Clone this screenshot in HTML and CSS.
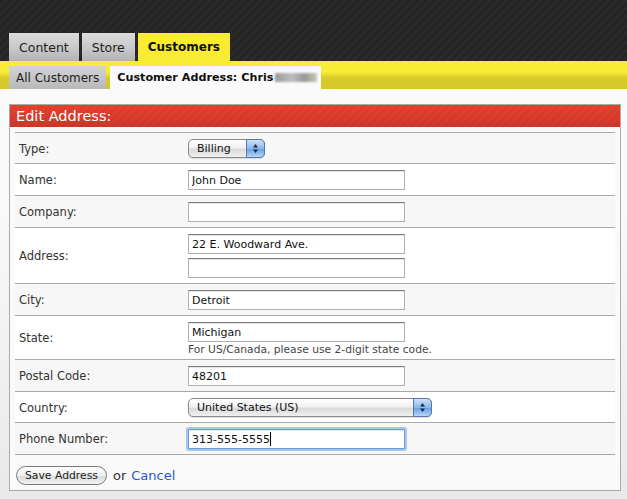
FILE: index.html
```html
<!DOCTYPE html>
<html lang="en">
<head>
<meta charset="utf-8">
<title>Edit Address</title>
<link rel="stylesheet" href="styles.css">
</head>
<body>
<header class="topbar">
  <nav class="tabs">
    <a class="tab" href="#">Content</a>
    <a class="tab" href="#">Store</a>
    <a class="tab active" href="#">Customers</a>
  </nav>
</header>
<div class="subbar">
  <a class="subtab" href="#">All Customers</a>
  <span class="subtab current">Customer Address: Chris <span class="blur"></span></span>
</div>
<main class="page">
  <section class="card">
    <h2 class="card-title">Edit Address:</h2>
    <form class="form">
      <div class="row odd">
        <label>Type:</label>
        <div class="field">
          <span class="select select-small">
            <select><option>Billing</option></select>
            <span class="arrows"><svg width="7" height="11" viewBox="0 0 7 11"><path d="M3.5 1 L6 4.5 H1 Z M3.5 10 L6 6.5 H1 Z" fill="#1c2b46"/></svg></span>
          </span>
        </div>
      </div>
      <div class="row">
        <label>Name:</label>
        <div class="field"><input class="text" type="text" value="John Doe"></div>
      </div>
      <div class="row odd">
        <label>Company:</label>
        <div class="field"><input class="text" type="text" value=""></div>
      </div>
      <div class="row">
        <label>Address:</label>
        <div class="field stack">
          <input class="text" type="text" value="22 E. Woodward Ave.">
          <input class="text" type="text" value="">
        </div>
      </div>
      <div class="row odd">
        <label>City:</label>
        <div class="field"><input class="text" type="text" value="Detroit"></div>
      </div>
      <div class="row">
        <label>State:</label>
        <div class="field stack">
          <input class="text" type="text" value="Michigan">
          <span class="hint">For US/Canada, please use 2-digit state code.</span>
        </div>
      </div>
      <div class="row odd">
        <label>Postal Code:</label>
        <div class="field"><input class="text" type="text" value="48201"></div>
      </div>
      <div class="row">
        <label>Country:</label>
        <div class="field">
          <span class="select select-wide">
            <select><option>United States (US)</option></select>
            <span class="arrows"><svg width="7" height="11" viewBox="0 0 7 11"><path d="M3.5 1 L6 4.5 H1 Z M3.5 10 L6 6.5 H1 Z" fill="#1c2b46"/></svg></span>
          </span>
        </div>
      </div>
      <div class="row odd">
        <label>Phone Number:</label>
        <div class="field"><span class="focus-wrap"><input class="text focused" type="text" value="313-555-5555"><span class="caret-hint">313-555-5555<span class="caret"></span></span></span></div>
      </div>
      <div class="actions">
        <button type="button" class="btn">Save Address</button>
        <span class="or">or</span>
        <a class="cancel" href="#">Cancel</a>
      </div>
    </form>
  </section>
</main>
</body>
</html>
```
FILE: styles.css
```css
* { box-sizing: border-box; }
html, body { margin: 0; padding: 0; }
body {
  font-family: "DejaVu Sans", "Lucida Grande", sans-serif;
  font-size: 11.5px;
  color: #333;
  background: linear-gradient(#fafafa, #fafafa 200px, #e9e9e9);
  min-height: 499px;
}
a { text-decoration: none; }

.topbar {
  height: 61px;
  background:
    repeating-linear-gradient(135deg, #242424 0 3px, #2a2a2a 3px 6px);
  display: flex;
  align-items: flex-end;
  padding-left: 9px;
}
.tabs { display: flex; gap: 3px; }
.tab {
  height: 28px;
  padding: 0 10px;
  display: flex;
  align-items: center;
  font-size: 12.5px;
  color: #1e1e1e;
  background: linear-gradient(#dcdcdc, #c6c6c6 60%, #b2b2b2);
}
.tab.active {
  background: #f9eb33;
  font-weight: bold;
  font-size: 12px;
  color: #111;
}

.subbar {
  height: 28px;
  background: linear-gradient(#f9ec34 0, #f9ec34 11px, #d8ca2b 17px, #d6c82a);
  display: flex;
  align-items: flex-end;
  padding-left: 9px;
  gap: 4px;
}
.subtab {
  height: 23px;
  padding: 0 7px;
  display: flex;
  align-items: center;
  white-space: nowrap;
  font-size: 12px;
  color: #1e1e1e;
  background: linear-gradient(#d4d4d4, #b8b8b8);
}
.subtab.current {
  background: linear-gradient(#f4f4f4, #fbfbfb 30%, #fafafa);
  font-weight: bold;
  font-size: 11.2px;
  color: #111;
  padding-right: 4px;
}
.blur {
  display: inline-block;
  width: 42px;
  height: 9px;
  margin-left: 2px;
  background: linear-gradient(90deg, #9a9a9a, #bdbdbd 40%, #999 70%, #c8c8b0);
  filter: blur(1.2px);
}

.page { padding: 15px 6px 0 9px; }
.card {
  border: 1px solid #aaa;
  background: #fafafa;
  height: 387px;
}
.card-title {
  margin: 0;
  height: 22px;
  padding-left: 6px;
  display: flex;
  align-items: center;
  font-size: 14.5px;
  font-weight: normal;
  color: #fff;
  background:
    repeating-linear-gradient(135deg, rgba(255,255,255,0) 0 3px, rgba(0,0,0,0.035) 3px 6px),
    linear-gradient(#e4452f, #d93c2c 60%, #cc3728);
}
.form { margin: 5px 5px 0; }
.row {
  display: grid;
  grid-template-columns: 173px 1fr;
  align-items: center;
  border-bottom: 1px solid #a9a9a9;
  padding: 6px 0 5px;
  background: #fff;
}
.row:first-child { border-top: 1px solid #a9a9a9; }
.row.odd { background: #f7f7f7; }
.row label { padding-left: 4px; color: #333; }
.field { display: flex; align-items: center; }
.stack { flex-direction: column; align-items: flex-start; gap: 4px; }

.text {
  width: 217px;
  height: 20px;
  border: 1px solid #b0b0b0;
  border-top-color: #7c7c7c;
  box-shadow: inset 0 1px 0 #e6e6e6;
  background: #fff;
  font-family: "DejaVu Sans", sans-serif;
  font-size: 11px;
  color: #111;
  padding: 0 3px;
  margin: 0;
  outline: none;
}
.hint {
  font-size: 10.7px;
  line-height: 12px;
  color: #444;
  margin-top: -2px;
  margin-bottom: -2px;
}

.focus-wrap { position: relative; display: inline-block; }
.text.focused {
  border: 1px solid #6c9ad6;
  box-shadow: 0 0 0 2px #a6c6ee, inset 0 1px 0 #e6e6e6;
  border-radius: 1px;
}
.caret-hint {
  position: absolute;
  left: 4px;
  top: 3px;
  font-size: 11px;
  color: transparent;
  pointer-events: none;
  line-height: 14px;
}
.caret {
  display: inline-block;
  width: 1px;
  height: 14px;
  background: #000;
  vertical-align: top;
}

.select {
  position: relative;
  display: inline-flex;
  height: 19px;
}
.select select {
  -webkit-appearance: none;
  appearance: none;
  width: 100%;
  height: 19px;
  border: 1px solid #8a8a8a;
  border-radius: 5px;
  background: linear-gradient(#ffffff, #f1f1f1 45%, #dadada 55%, #f0f0f0);
  font-family: "DejaVu Sans", sans-serif;
  font-size: 11px;
  color: #111;
  padding: 0 0 0 8px;
  margin: 0;
  box-shadow: 0 1px 1px rgba(0,0,0,0.12);
}
.select-small { width: 77px; }
.select-wide { width: 244px; }
.arrows {
  position: absolute;
  right: 0;
  top: 0;
  width: 19px;
  height: 19px;
  border: 1px solid #5877a8;
  border-radius: 0 5px 5px 0;
  background: linear-gradient(#cfe2f8, #8db7ea 50%, #6aa2e6 55%, #b7d6f7);
  display: flex;
  align-items: center;
  justify-content: center;
}

.actions {
  display: flex;
  align-items: center;
  padding: 11px 0 0 1px;
  gap: 6px;
}
.btn {
  height: 19px;
  padding: 0 8px;
  border: 1px solid #7a7a7a;
  border-radius: 10px;
  background: linear-gradient(#ffffff, #f0f0f0 50%, #dcdcdc 55%, #f2f2f2);
  font-family: "DejaVu Sans", sans-serif;
  font-size: 10.8px;
  color: #222;
  margin: 0;
}
.or { font-size: 13px; color: #333; }
.cancel { font-size: 13px; color: #2a56c6; margin-left: -1px; }
```
